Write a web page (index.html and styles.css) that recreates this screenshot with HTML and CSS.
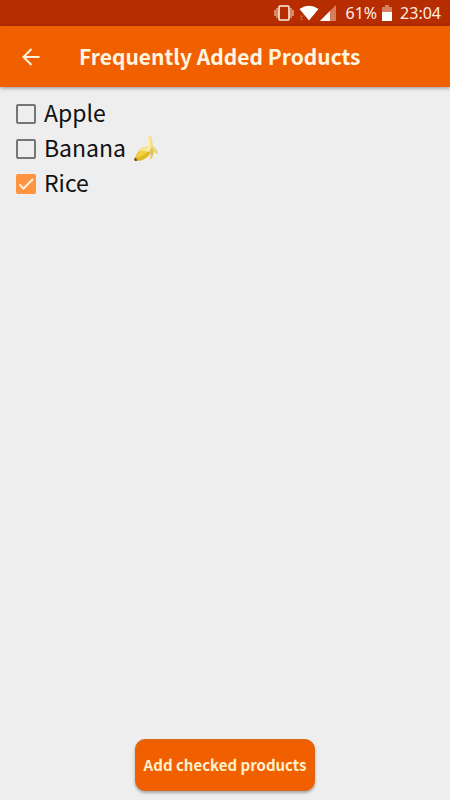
FILE: index.html
```html
<!DOCTYPE html>
<html lang="en">
<head>
<meta charset="utf-8">
<meta name="viewport" content="width=device-width, initial-scale=1">
<title>Frequently Added Products</title>
<link rel="stylesheet" href="styles.css">
</head>
<body>
<div class="status">
  <svg class="status-vibrate" width="20" height="16" viewBox="0 0 20 16" aria-hidden="true">
    <rect x="5" y="1" width="10" height="14" rx="1" fill="none" stroke="#fff0e4" stroke-width="1.6"/>
    <path d="M3 3v10M17 3v10M1 5v6M19 5v6" stroke="#eab59f" stroke-width="1.3"/>
  </svg>
  <svg class="status-wifi" width="20" height="16" viewBox="0 0 20 16" aria-hidden="true">
    <path d="M.5 4Q10-2.5 19.5 4L10 15.500Z" fill="#fff"/>
    <path d="M1 12l1.500-2L4 12zM1 13.500l1.500 2 1.500-2z" fill="#d5724e"/>
  </svg>
  <svg class="status-signal" width="16" height="16" viewBox="0 0 16 16" aria-hidden="true">
    <path d="M16 0v16H0z" fill="#d77d60"/>
    <path d="M10 6v10H0z" fill="#fff"/>
  </svg>
  <span class="status-percent">61%</span>
  <svg class="status-battery" width="10" height="16" viewBox="0 0 10 16" aria-hidden="true">
    <path d="M3 0h4v2h3v5H0V2h3z" fill="#d77d60"/>
    <path d="M0 7h10v9H0z" fill="#fff"/>
  </svg>
  <time>23:04</time>
</div>
<header class="bar">
  <button class="back" type="button" aria-label="Back">
    <svg width="18" height="18" viewBox="0 0 18 18" aria-hidden="true">
      <path d="M17.500 9H1.500M9.500 1L1.500 9l8 8" fill="none" stroke="#fff5e0" stroke-width="2"/>
    </svg>
  </button>
  <h1>Frequently Added Products</h1>
</header>
<main>
  <ul class="list">
    <li><label><input type="checkbox"><span>Apple</span></label></li>
    <li><label><input type="checkbox"><span>Banana</span>
      <svg class="banana" width="25" height="27" viewBox="0 0 26 28" role="img" aria-label="banana">
        <path d="M1 24C3 18 8 13 14 12l5 3c-2 7-9 12-16 12-2 0-3-1-2-3z" fill="#e0b823"/>
        <path d="M2 23c3-6 7-9 12-10l2 2c-3 4-8 8-14 8z" fill="#f2d140"/>
        <path d="M14 13C10 11 6 13 4 17c4-1 8-1 11 1z" fill="#f5e595"/>
        <path d="M14 1.500l4-.5 1 6c1 4 2 6 3 9l-4 3-4-4c1-4 1-9 0-13.500z" fill="#f3df8c"/>
        <path d="M14 1.500l2 0c1 6 1 11 0 16l-3-2c2-5 2-9 1-14z" fill="#faf0bd"/>
        <path d="M18 12c4 0 7 4 7 9-2-2-4-3-6-3z" fill="#edd57b"/>
        <path d="M16 15c2 2 2 7 0 11l3-3c2-3 1-6 0-9z" fill="#dfc15c"/>
        <path d="M1 23.500l2 1.500v2c-3 0-3.500-1-2-3.500z" fill="#67491f"/>
      </svg></label></li>
    <li><label><input type="checkbox" checked><span>Rice</span></label></li>
  </ul>
</main>
<footer><button class="add" type="button">Add checked products</button></footer>
</body>
</html>
```

FILE: styles.css
```css
* { box-sizing: border-box; }

body {
  margin: 0;
  min-height: 100vh;
  display: flex;
  flex-direction: column;
  background: #eee;
  color: #111;
  font-family: "Noto Sans CJK SC", "Noto Sans", sans-serif;
}

.status {
  height: 26px;
  padding: 0 9px;
  display: flex;
  align-items: center;
  justify-content: flex-end;
  background: #b52d00;
  color: #ffede4;
  font: 16px/26px "Noto Sans", sans-serif;
}

.status-wifi { margin-left: 5px; }
.status-signal { margin-left: 1px; }
.status-percent { margin-left: 9px; }
.status-battery { margin: 0 8px 0 5px; }

.bar {
  height: 61px;
  padding: 0 16px;
  display: flex;
  align-items: center;
  gap: 33px;
  background: #f06000;
  color: #fff5e0;
  box-shadow: 0 1px 4px rgba(0, 0, 0, 0.4);
}

.back {
  display: flex;
  padding: 6px;
  border: 0;
  background: none;
}

h1 {
  margin: 0;
  padding-bottom: 2px;
  font-size: 21px;
  line-height: 30px;
  font-weight: 700;
  white-space: nowrap;
}

main { flex: 1; }

.list {
  margin: 0;
  padding: 9px 16px;
  list-style: none;
}

.list label {
  height: 35px;
  display: flex;
  align-items: center;
  gap: 8px;
  font-size: 23px;
  line-height: 33px;
}

.list span { padding-bottom: 2px; }

input {
  appearance: none;
  width: 20px;
  height: 20px;
  margin: 0;
  border: 2px solid #757575;
  border-radius: 2px;
}

input:checked {
  border: 0;
  background: #ff9440 url("data:image/svg+xml,%3Csvg xmlns='http://www.w3.org/2000/svg' viewBox='0 0 20 20'%3E%3Cpath d='M3.500 10.500l4 4L17 5' fill='none' stroke='%23fff0df' stroke-width='2'/%3E%3C/svg%3E");
}

footer {
  display: flex;
  justify-content: center;
  padding-bottom: 9px;
}

.add {
  height: 52px;
  padding: 0 8px;
  border: 1px solid #d96a1c;
  border-radius: 10px;
  background: #f06000;
  color: #fff0cc;
  font: 700 15px/24px "Noto Sans CJK SC", "Noto Sans", sans-serif;
  box-shadow: 0 2px 3px rgba(0, 0, 0, 0.3);
}
```
